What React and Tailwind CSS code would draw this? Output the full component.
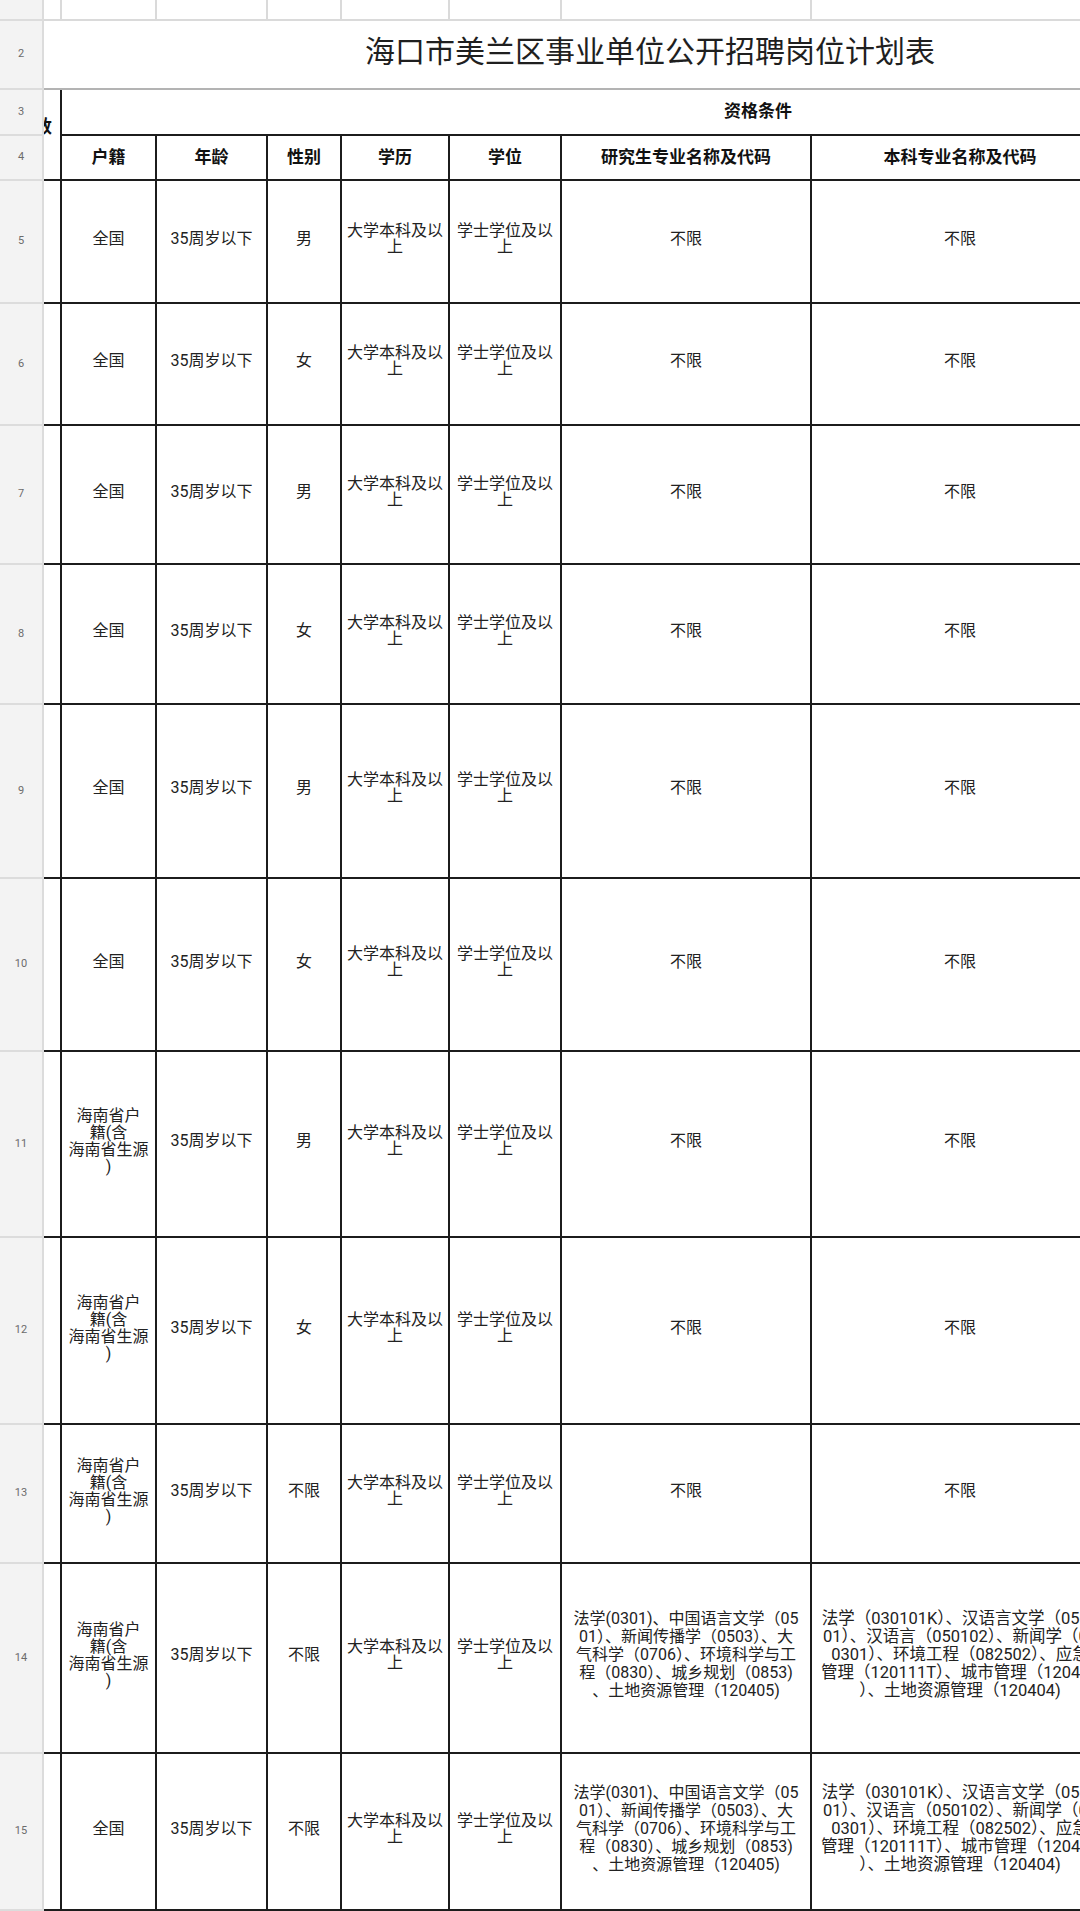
import React from 'react';

const GRAD_TEXT = [
  '法学(0301)、中国语言文学（05',
  '01）、新闻传播学（0503）、大',
  '气科学（0706）、环境科学与工',
  '程（0830）、城乡规划（0853)',
  '、土地资源管理（120405)',
];

const UNDERGRAD_TEXT = [
  '法学（030101K）、汉语言文学（0501',
  '01）、汉语言（050102）、新闻学（05',
  '0301）、环境工程（082502）、应急',
  '管理（120111T）、城市管理（120405',
  '）、土地资源管理（120404)',
];

const HAINAN = ['海南省户', '籍(含', '海南省生源', ')'];

const rows = [
  { n: 5, huji: 'all', sex: '男', long: false },
  { n: 6, huji: 'all', sex: '女', long: false },
  { n: 7, huji: 'all', sex: '男', long: false },
  { n: 8, huji: 'all', sex: '女', long: false },
  { n: 9, huji: 'all', sex: '男', long: false },
  { n: 10, huji: 'all', sex: '女', long: false },
  { n: 11, huji: 'hainan', sex: '男', long: false },
  { n: 12, huji: 'hainan', sex: '女', long: false },
  { n: 13, huji: 'hainan', sex: '不限', long: false },
  { n: 14, huji: 'hainan', sex: '不限', long: true },
  { n: 15, huji: 'all', sex: '不限', long: true },
];

const RowNum = ({ n }) => (
  <div className="flex items-center justify-center bg-[#f3f3f3] border-r-2 border-b-2 border-[#dcdcdc] text-[11px] text-[#6b6b6b]">
    {n}
  </div>
);

const Cell = ({ children, className = '' }) => (
  <div
    className={`flex flex-col items-center justify-center text-center border-r-2 border-b-2 border-[#1c1c1c] overflow-hidden ${className}`}
  >
    {children}
  </div>
);

const Lines = ({ lines, className = '' }) => (
  <div className={className}>
    {lines.map((l, i) => (
      <div key={i} className="whitespace-nowrap">
        {l}
      </div>
    ))}
  </div>
);

const App = () => {
  return (
    <div className="w-[1080px] h-[1911px] overflow-hidden bg-white text-[#222] [font-family:Roboto,'Noto_Sans_CJK_SC',sans-serif]">
      <div className="w-[1110px] grid grid-cols-[44px_18px_95px_111px_74px_108px_112px_250px_298px] grid-rows-[21px_69px_46px_45px_123px_122px_139px_140px_174px_173px_186px_187px_139px_190px_157px]">
        {/* row 1, cut off at the top */}
        <RowNum n="" />
        {[0, 1, 2, 3, 4, 5, 6, 7].map((i) => (
          <div key={i} className="border-r-2 border-b-2 border-[#dadada]" />
        ))}

        {/* row 2: title */}
        <RowNum n={2} />
        <div className="col-span-8 flex items-center pl-[321px] pb-[6px] border-b-2 border-[#b3b3b3] text-[30px] text-[#1f1f1f] whitespace-nowrap">
          海口市美兰区事业单位公开招聘岗位计划表
        </div>

        {/* row 3 */}
        <RowNum n={3} />
        <div className="row-span-2 flex items-center overflow-hidden pb-[16px] border-r-2 border-b-2 border-[#1c1c1c] text-[18px] font-bold text-[#111]">
          <span className="-ml-[10px]">数</span>
        </div>
        <div className="col-span-7 flex items-center pl-[662px] border-b-2 border-[#1c1c1c] text-[17px] font-bold text-[#111] whitespace-nowrap">
          资格条件
        </div>

        {/* row 4: column headers */}
        <RowNum n={4} />
        {['户籍', '年龄', '性别', '学历', '学位', '研究生专业名称及代码', '本科专业名称及代码'].map((h) => (
          <Cell key={h} className="text-[17px] font-bold text-[#111] whitespace-nowrap">
            {h}
          </Cell>
        ))}

        {rows.map((r) => (
          <React.Fragment key={r.n}>
            <RowNum n={r.n} />
            <div className="border-r-2 border-b-2 border-[#1c1c1c]" />
            <Cell className="text-[16px] pb-[6px]">
              {r.huji === 'all' ? '全国' : <Lines lines={HAINAN} className="leading-[17px]" />}
            </Cell>
            <Cell className="text-[16px] pb-[6px]">35周岁以下</Cell>
            <Cell className="text-[16px] pb-[6px]">{r.sex}</Cell>
            <Cell className="text-[16px] pb-[6px]">
              <Lines lines={['大学本科及以', '上']} className="leading-[16px]" />
            </Cell>
            <Cell className="text-[16px] pb-[6px]">
              <Lines lines={['学士学位及以', '上']} className="leading-[16px]" />
            </Cell>
            <Cell className="text-[16px] pb-[6px]">
              {r.long ? <Lines lines={GRAD_TEXT} className="leading-[18px]" /> : '不限'}
            </Cell>
            <Cell className="text-[16px] pb-[6px]">
              {r.long ? (
                <Lines lines={UNDERGRAD_TEXT} className="self-stretch text-[16.5px] leading-[18px]" />
              ) : (
                '不限'
              )}
            </Cell>
          </React.Fragment>
        ))}
      </div>
    </div>
  );
};

export default App;
